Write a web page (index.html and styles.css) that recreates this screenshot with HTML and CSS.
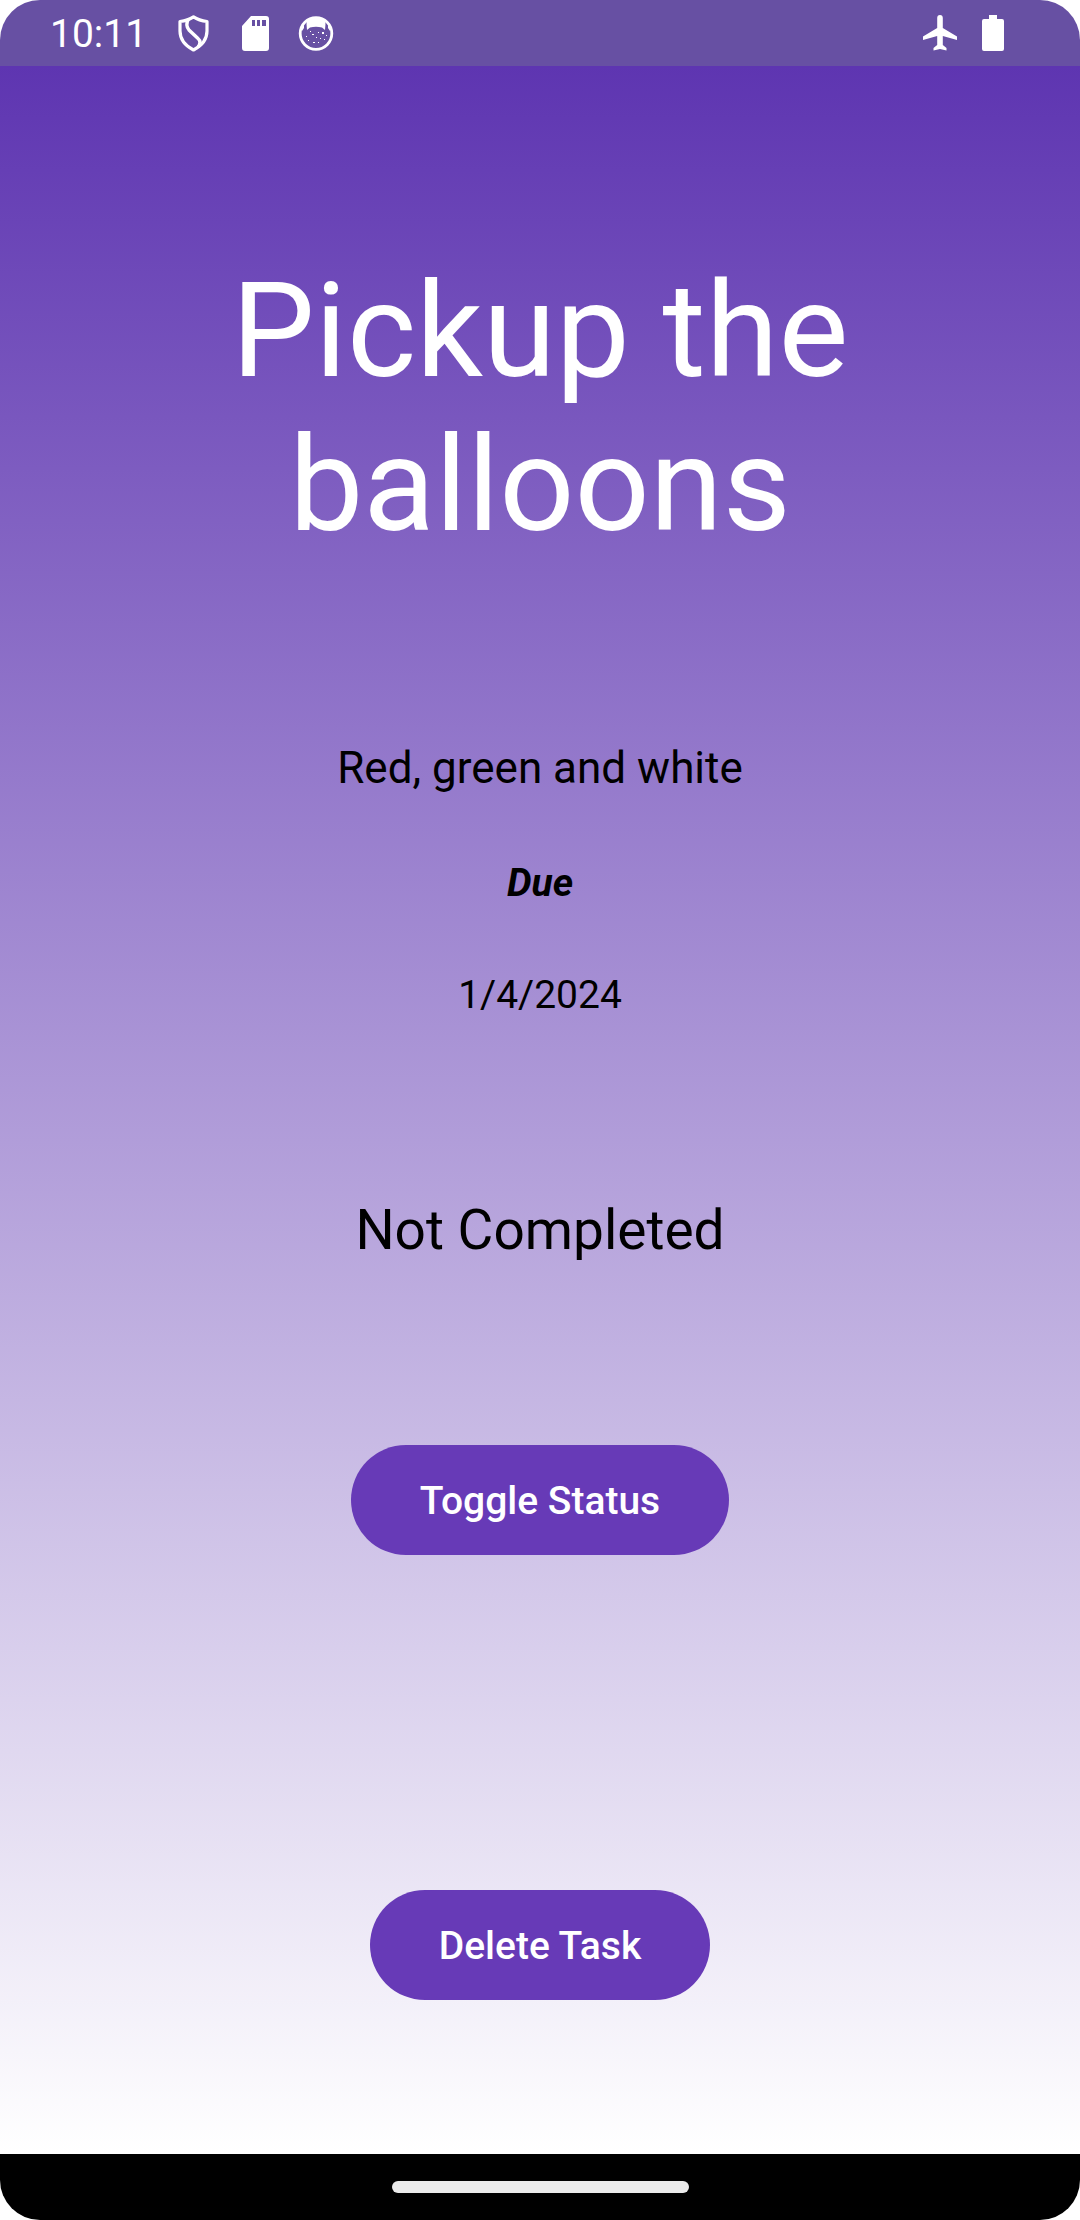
FILE: index.html
```html
<!DOCTYPE html>
<html lang="en">
<head>
  <meta charset="utf-8">
  <meta name="viewport" content="width=device-width, initial-scale=1">
  <title>Task details</title>
  <link rel="stylesheet" href="styles.css">
</head>
<body>
  <div class="screen">
    <header class="status-bar">
      <span class="clock">10:11</span>
      <svg class="icon" viewBox="0 0 36 38" aria-hidden="true">
        <path d="M17.500 2.800Q23 6.500 31 7.500V17Q31 29 17.500 36Q4 29 4 17V7.500Q12 6.500 17.500 2.800Z" fill="none" stroke="#fff" stroke-width="3.2" stroke-linejoin="round"/>
        <path d="M12.500 5Q9 11 13 16L22 24.500Q26 28 22 33" fill="none" stroke="#fff" stroke-width="3.400"/>
      </svg>
      <svg class="icon" viewBox="0 0 36 38" aria-hidden="true">
        <path fill="#fff" fill-rule="evenodd" d="M14 2H29Q32 2 32 5V34Q32 37 29 37H8Q5 37 5 34V12ZM15 6V12H18V6ZM20 6V12H23V6ZM25 6V12H29V6Z"/>
      </svg>
      <svg class="icon" viewBox="0 0 36 38" aria-hidden="true">
        <circle cx="18" cy="19.5" r="15.8" fill="none" stroke="#fff" stroke-width="2.800"/>
        <path fill="#fff" d="M9 6Q18 1 27 6L27.500 10L27 16L24 13.500Q18 12 12 13.500L9 16L8.500 10ZM4 13L6 11L6 14L4 17ZM32 13L30 11V14L32 17Z"/>
        <path fill="#fff" d="M12 17h1v1h-1zM14 20h2v1h-2zM20 18h1v1h-1zM24 18h2v2h-2zM28 21h1v1h-1zM8 22h1v1h-1zM10 26h1v1h-1zM18 23h1v1h-1zM22 24h1v1h-1zM26 25h1v1h-1zM15 28h2v1h-2zM20 28h1v1h-1z"/>
      </svg>
      <svg class="icon icon-plane" viewBox="0 0 36 38" aria-hidden="true">
        <path fill="#fff" d="M15.200 4Q15.200 1 18 1Q20.800 1 20.800 4V14L35 22.500V26L20.800 22V31L24.500 34V36.500L18 35L11.500 36.500V34L15.200 31V22L1 26V22.500L15.200 14Z"/>
      </svg>
      <svg class="icon icon-battery" viewBox="0 0 22 38" aria-hidden="true">
        <path fill="#fff" d="M7 1H15V5H20Q22 5 22 7V35Q22 37 20 37H2Q0 37 0 35V7Q0 5 2 5H7Z"/>
      </svg>
    </header>

    <main class="task">
      <h1 class="title">Pickup the balloons</h1>
      <div class="details">
        <p class="description">Red, green and white</p>
        <p class="due-label">Due</p>
        <p class="due-date">1/4/2024</p>
      </div>
      <p class="state">Not Completed</p>
      <button class="button" type="button">Toggle Status</button>
      <button class="button button-delete" type="button">Delete Task</button>
    </main>

    <footer class="nav-bar"><span class="nav-handle"></span></footer>
  </div>
</body>
</html>
```
FILE: styles.css
```css
* {
  box-sizing: border-box;
}

body {
  margin: 0;
  background: #fff;
  font-family: Roboto, sans-serif;
}

h1,
p {
  margin: 0;
  font-weight: 400;
}

.screen {
  display: flex;
  flex-direction: column;
  min-height: 100vh;
  overflow: hidden;
  border-radius: 40px;
}

.status-bar {
  display: flex;
  align-items: center;
  height: 66px;
  padding: 0 76px 0 50px;
  background: #6750a3;
  color: #fff;
}

.clock {
  padding-top: 2px;
  margin-right: 29px;
  font-size: 39px;
  line-height: 46px;
}

.icon {
  width: 36px;
  height: 38px;
  margin-right: 25px;
}

.icon-plane {
  margin-right: 24px;
  margin-left: auto;
}

.icon-battery {
  width: 22px;
  margin-right: 0;
}

.task {
  display: flex;
  flex: 1;
  flex-direction: column;
  align-items: center;
  padding: 188px 132px 154px;
  background: linear-gradient(#5e35b1, #fff);
  color: #000;
  text-align: center;
}

.title {
  max-width: 700px;
  color: #fff;
  font-size: 132px;
  line-height: 154px;
}

.details {
  display: flex;
  flex-direction: column;
  gap: 66px;
  margin: 180px 0;
}

.description {
  font-size: 44px;
  line-height: 52px;
}

.due-label,
.due-date {
  font-size: 39px;
  line-height: 46px;
}

.due-label {
  font-style: italic;
  font-weight: 700;
}

.state {
  margin-bottom: 183px;
  font-size: 55px;
  line-height: 64px;
}

.button {
  height: 110px;
  padding: 2px 69px 0;
  border: 0;
  border-radius: 55px;
  background: #673ab7;
  color: #fff;
  font: 500 39px/46px Roboto, sans-serif;
}

.button-delete {
  margin-top: auto;
}

.nav-bar {
  display: flex;
  align-items: center;
  justify-content: center;
  height: 66px;
  background: #000;
}

.nav-handle {
  width: 297px;
  height: 12px;
  border-radius: 6px;
  background: #ebebeb;
}
```
